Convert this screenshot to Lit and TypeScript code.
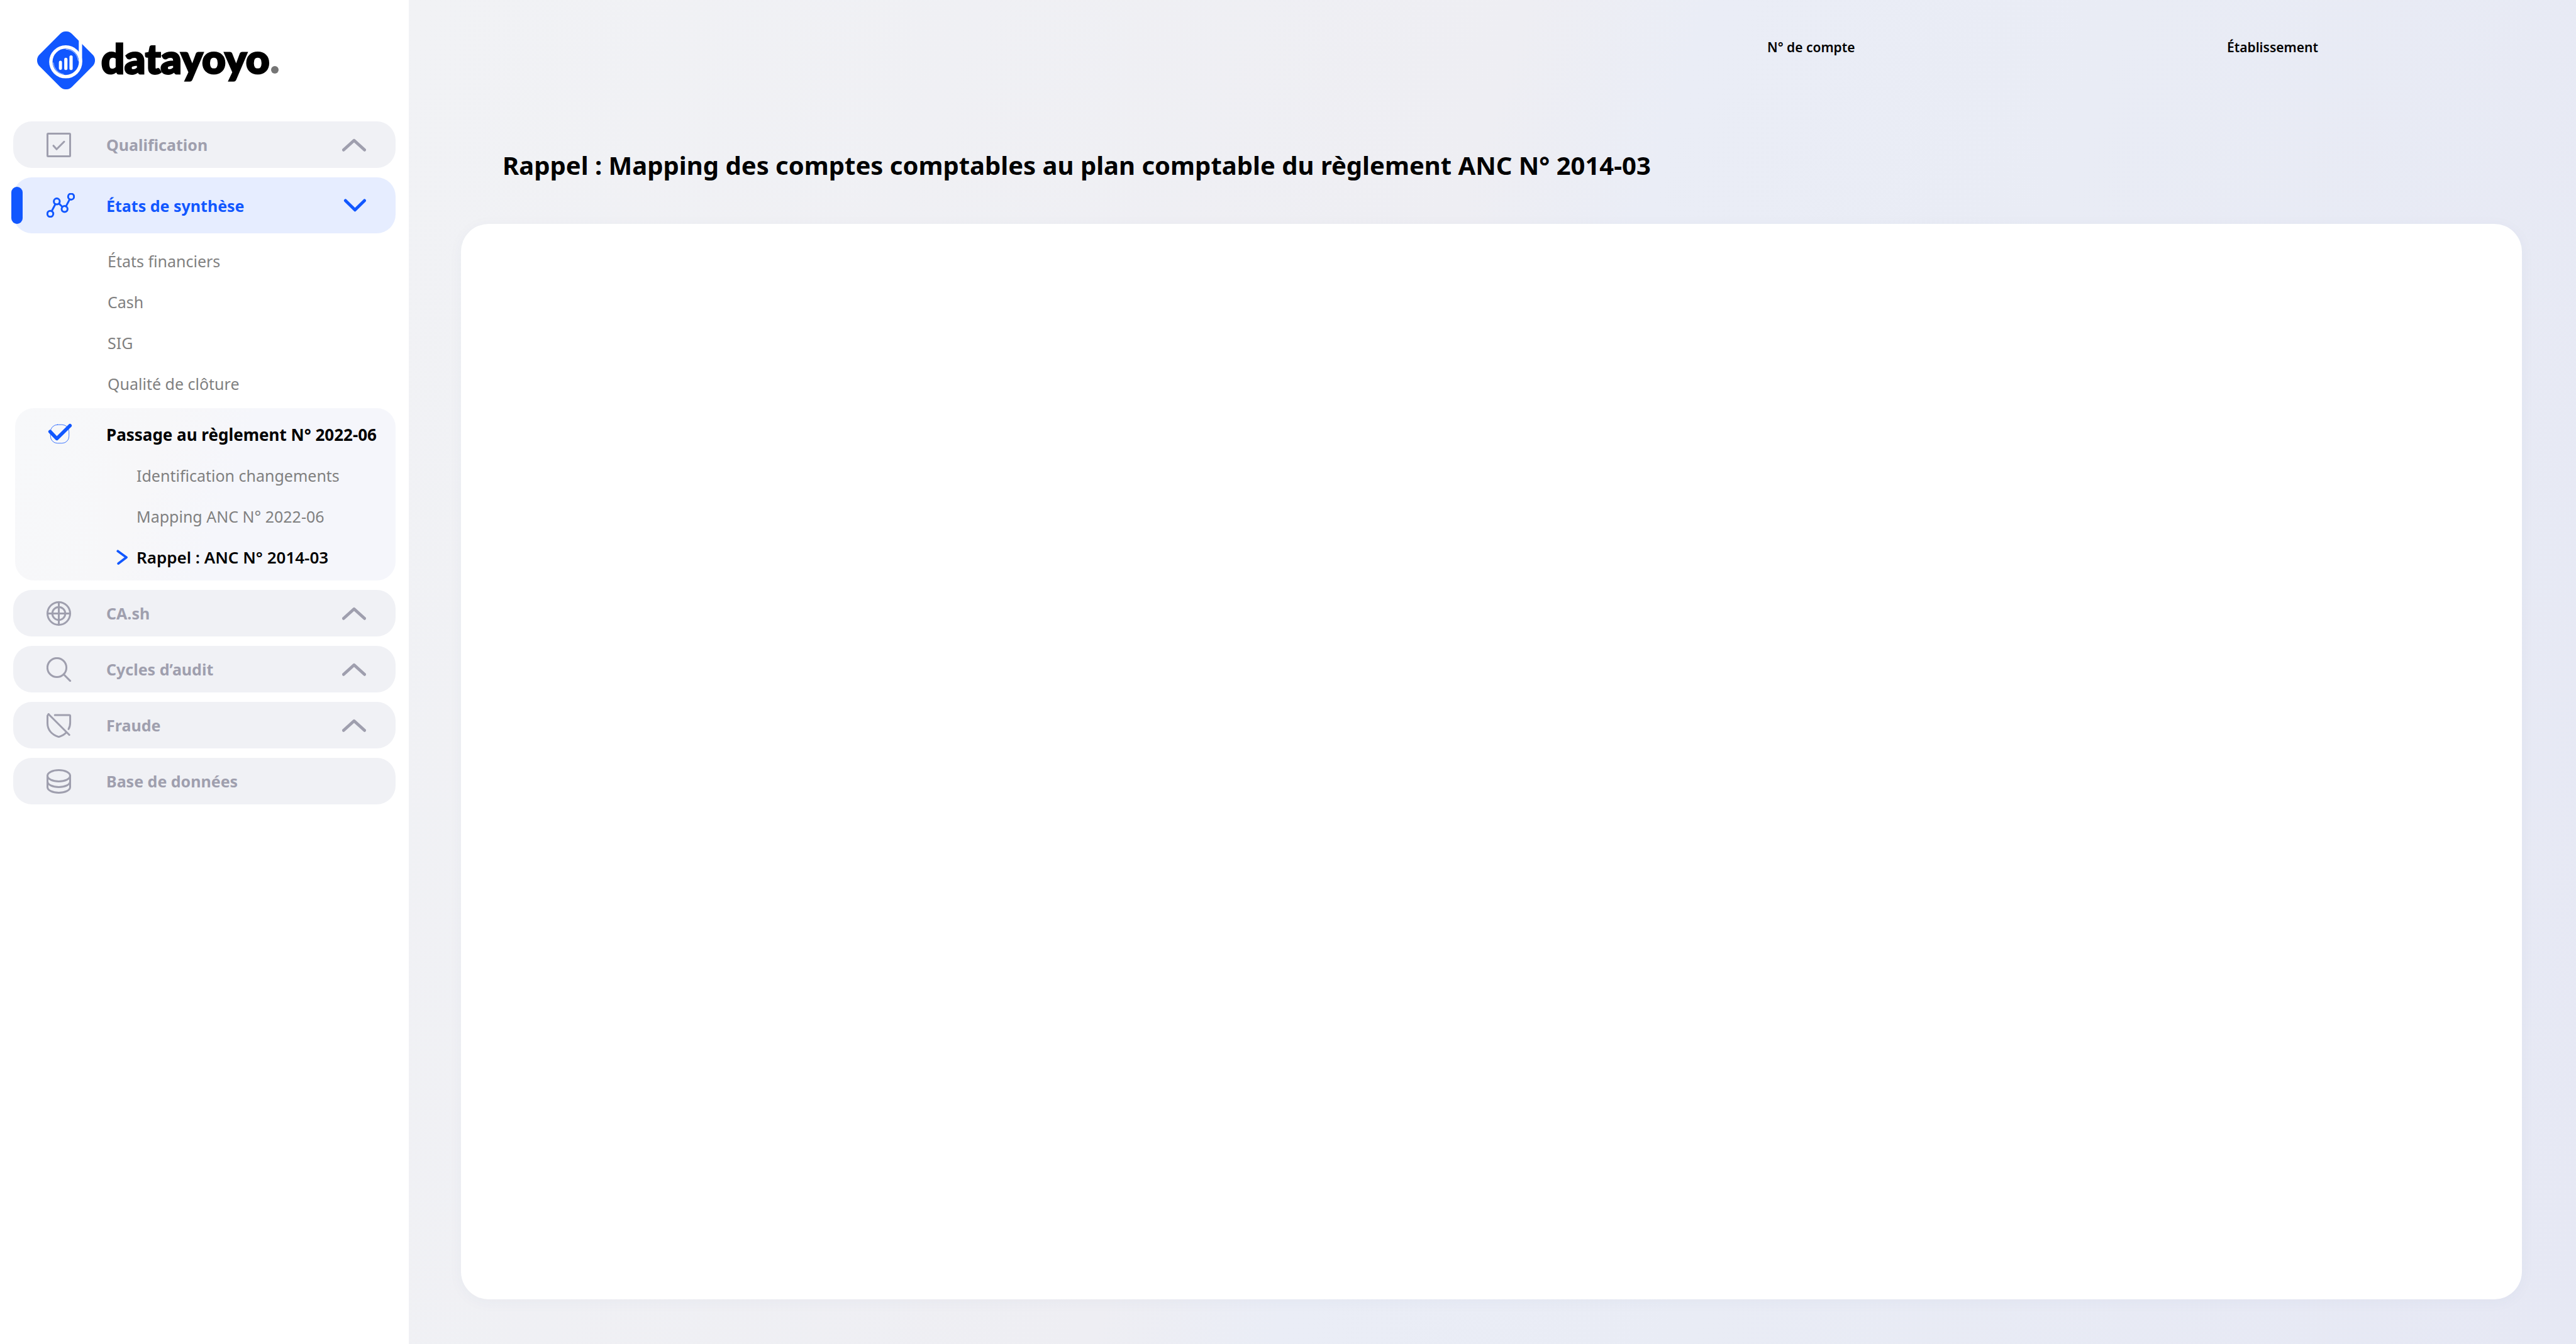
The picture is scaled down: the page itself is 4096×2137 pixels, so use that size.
import { LitElement, html, svg, css, nothing, type TemplateResult, type SVGTemplateResult } from "lit";
import { customElement, property, state } from "lit/decorators.js";
import { classMap } from "lit/directives/class-map.js";

type IconName = "checkbox" | "chart" | "target" | "search" | "shield" | "database";

interface Section {
  label: string;
  icon: IconName;
  expandable: boolean;
  active?: boolean;
}

const ICONS: Record<IconName, SVGTemplateResult> = {
  checkbox: svg`
    <rect x="1.5" y="1.5" width="36" height="36" rx="1"></rect>
    <path d="M11 20.7 16 26.3 28 14.3"></path>`,
  chart: svg`
    <circle cx="6" cy="33" r="4.7"></circle>
    <circle cx="16.3" cy="13.3" r="4.7"></circle>
    <circle cx="28.7" cy="25.3" r="4.7"></circle>
    <circle cx="39" cy="5.7" r="4.7"></circle>
    <path d="M8.2 28.8 14.1 17.5M19.7 16.6 25.3 22M30.9 21.1 36.8 9.9"></path>`,
  target: svg`
    <circle cx="19.5" cy="19.5" r="18"></circle>
    <circle cx="19.5" cy="19.5" r="10.3"></circle>
    <path d="M19.5 1.5V37.5M1.5 19.5H37.5"></path>`,
  search: svg`
    <circle cx="16.5" cy="16.5" r="15.1"></circle>
    <path d="M27.5 27.5 37.6 37.6"></path>`,
  shield: svg`
    <path d="M3.2 1.5 36.2 34.5"></path>
    <path d="M3.2 1.5 1.5 4V16C1.5 27 9 34.8 19.5 37.7 24 36.3 28.3 34 31.3 30.8"></path>
    <path d="M13.2 3H36.2Q37.6 3 37.6 4.4V14.5C37.6 19 36.8 22.4 35 25.3"></path>`,
  database: svg`
    <ellipse cx="19.5" cy="10.5" rx="18" ry="9"></ellipse>
    <path d="M1.5 10.5V28.5C1.5 33.5 9.5 37.5 19.5 37.5S37.5 33.5 37.5 28.5V10.5"></path>
    <path d="M1.5 19.5C1.5 24.5 9.5 28.5 19.5 28.5S37.5 24.5 37.5 19.5"></path>`,
};

@customElement("brand-logo")
class BrandLogo extends LitElement {
  static styles = css`
    :host {
      display: flex;
      align-items: center;
      height: 92px;
    }
    .mark {
      width: 92px;
      height: 92px;
      margin-right: 10px;
    }
    .word {
      padding-bottom: 8px;
      font: 900 65px/66px Lato, sans-serif;
      color: #000;
      -webkit-text-stroke: 3px #000;
    }
    .dot {
      align-self: flex-end;
      width: 12px;
      height: 12px;
      margin: 0 0 25px 2px;
      border-radius: 50%;
      background: #757575;
    }
  `;

  render() {
    return html`
      <svg class="mark" viewBox="0 0 93 93" aria-hidden="true">
        <rect x="9.7" y="9.7" width="73.6" height="73.6" rx="13.3" fill="#1157ff" transform="rotate(45 46.5 46.5)"></rect>
        <path d="M67 0H72.3V48.8H67Z" fill="#fff"></path>
        <circle cx="46" cy="48.8" r="23.9" fill="none" stroke="#fff" stroke-width="5.4"></circle>
        <path d="M46 28.6A20.2 20.2 0 0 1 66 47M26 50A20.2 20.2 0 0 0 43 69" fill="none" stroke="#fff" stroke-width="0.7"></path>
        <g fill="#fff">
          <rect x="35" y="47" width="5" height="15" rx="2.5"></rect>
          <rect x="43.6" y="42.3" width="5.2" height="19.7" rx="2.6"></rect>
          <rect x="52" y="38.3" width="5.2" height="23.7" rx="2.6"></rect>
        </g>
      </svg>
      <span class="word">datayoyo</span>
      <span class="dot"></span>
    `;
  }
}

@customElement("nav-section")
class NavSection extends LitElement {
  @property({ attribute: false }) section!: Section;

  static styles = css`
    :host {
      display: block;
    }
    .item {
      position: relative;
      display: flex;
      align-items: center;
      box-sizing: border-box;
      width: 100%;
      height: 74px;
      padding: 0 47px 0 53px;
      border: 0;
      border-radius: 30px;
      background: #f0f1f5;
      color: #9f9fae;
      font: 700 25px/34px "Noto Sans", "Open Sans", sans-serif;
      text-align: left;
      text-decoration: none;
      cursor: pointer;
    }
    .item.active {
      height: 89px;
      background: #e6edff;
      color: #1157ff;
    }
    .item.active::before {
      content: "";
      position: absolute;
      left: -3px;
      top: 15px;
      width: 18px;
      height: 59px;
      border-radius: 9px;
      background: #1157ff;
    }
    .icon {
      flex: 0 0 95px;
      display: flex;
    }
    .icon svg {
      width: 45px;
      height: 39px;
    }
    .label {
      flex: 1;
    }
    svg {
      fill: none;
      stroke: currentColor;
      stroke-width: 3;
      stroke-linecap: round;
      stroke-linejoin: round;
    }
    .chevron {
      width: 38px;
      height: 21px;
      stroke-width: 5;
    }
  `;

  render() {
    const { label, icon, expandable, active = false } = this.section;
    const body = html`
      <span class="icon"><svg viewBox="0 0 45 39" aria-hidden="true">${ICONS[icon]}</svg></span>
      <span class="label">${label}</span>
      ${expandable
        ? html`<svg class="chevron" viewBox="0 0 39 21" aria-hidden="true">
            <path d=${active ? "M5.5 2.7 21 18 36.5 2.7" : "M2.5 18.5 19.5 3 36.5 18.5"}></path>
          </svg>`
        : nothing}
    `;
    const classes = classMap({ item: true, active });
    return expandable
      ? html`<button class=${classes} type="button" aria-expanded=${active ? "true" : "false"}>${body}</button>`
      : html`<a class=${classes} href="#">${body}</a>`;
  }
}

@customElement("app-root")
class AppRoot extends LitElement {
  @state() private before: Section[] = [
    { label: "Qualification", icon: "checkbox", expandable: true },
    { label: "États de synthèse", icon: "chart", expandable: true, active: true },
  ];

  @state() private after: Section[] = [
    { label: "CA.sh", icon: "target", expandable: true },
    { label: "Cycles d’audit", icon: "search", expandable: true },
    { label: "Fraude", icon: "shield", expandable: true },
    { label: "Base de données", icon: "database", expandable: false },
  ];

  private pages = ["États financiers", "Cash", "SIG", "Qualité de clôture"];

  static styles = css`
    :host {
      display: flex;
      min-height: 100vh;
      font-family: "Noto Sans", "Open Sans", sans-serif;
      color: #000;
    }
    .sidebar {
      flex: 0 0 650px;
      box-sizing: border-box;
      padding: 50px 21px 50px;
      background: #fff;
    }
    .logo {
      margin: 0 0 51px 38px;
    }
    .sections {
      display: flex;
      flex-direction: column;
      gap: 15px;
    }
    .group {
      display: flex;
      flex-direction: column;
    }
    .links {
      margin: 0;
      padding: 0;
      list-style: none;
    }
    .pages {
      padding: 11px 0 7px 150px;
    }
    .link {
      display: flex;
      align-items: center;
      height: 65px;
      color: #808080;
      font-size: 25px;
      line-height: 34px;
      text-decoration: none;
      white-space: nowrap;
    }
    .panel {
      margin-left: 3px;
      padding: 9px 0 5px 50px;
      border-radius: 30px;
      background: linear-gradient(110deg, #f7f8fa, #f7f7f9 35%, #f5f6fb 55%, #f5f6fb);
    }
    .strong {
      color: #000;
      font-size: 26px;
      font-weight: 600;
    }
    .heading {
      font-weight: 700;
    }
    .tick {
      flex: 0 0 95px;
      display: flex;
    }
    .tick svg {
      width: 39px;
      height: 33px;
      overflow: visible;
    }
    .nested {
      padding-left: 111px;
    }
    .pointer {
      flex: 0 0 32px;
      display: flex;
    }
    .pointer svg {
      width: 18px;
      height: 24px;
    }
    svg {
      fill: none;
      stroke: #1157ff;
      stroke-linecap: round;
      stroke-linejoin: round;
    }
    .main {
      flex: 1;
      display: flex;
      flex-direction: column;
      box-sizing: border-box;
      padding: 60px 0 71px;
      background: linear-gradient(108deg, #f1f2f5 0%, #eeeef3 43%, #eaedf6 50%, #e9ecf5 66%, #e6e8f4 100%);
    }
    .topbar {
      display: grid;
      grid-template-columns: 1fr 731px 555px;
      margin-bottom: 145px;
      font-size: 21px;
      font-weight: 600;
      line-height: 30px;
    }
    .account {
      grid-column: 2;
    }
    .title {
      margin: 0 86px 65px 149px;
      font-size: 40px;
      font-weight: 700;
      line-height: 56px;
    }
    .card {
      flex: 1;
      margin: 0 86px 0 83px;
      border-radius: 44px;
      background: #fff;
      box-shadow: 0 4px 24px rgba(60, 70, 120, 0.04);
    }
  `;

  private nestedLink(label: string, current = false): TemplateResult {
    return html`<li>
      <a class=${classMap({ link: true, strong: current })} href="#" aria-current=${current ? "page" : nothing}>
        <span class="pointer">
          ${current
            ? html`<svg viewBox="0 0 18 24" aria-hidden="true"><path d="M2.3 2.3 16 12.2 3.2 22" stroke-width="3.8"></path></svg>`
            : nothing}
        </span>
        ${label}
      </a>
    </li>`;
  }

  render() {
    return html`
      <aside class="sidebar">
        <brand-logo class="logo"></brand-logo>
        <nav class="sections">
          ${this.before.slice(0, 1).map((s) => html`<nav-section .section=${s}></nav-section>`)}
          <div class="group">
            ${this.before.slice(1).map((s) => html`<nav-section .section=${s}></nav-section>`)}
            <ul class="links pages">
              ${this.pages.map((p) => html`<li><a class="link" href="#">${p}</a></li>`)}
            </ul>
            <div class="panel">
              <a class="link strong heading" href="#">
                <span class="tick">
                  <svg viewBox="0 0 39 33" aria-hidden="true">
                    <rect x="6.3" y="1.3" width="29.4" height="29.4" rx="11" stroke-width="0.8"></rect>
                    <path d="M5.7 12.3 16.3 23.4 37.3 2.7" stroke-width="5.6"></path>
                  </svg>
                </span>
                Passage au règlement N° 2022-06
              </a>
              <ul class="links nested">
                ${this.nestedLink("Identification changements")}
                ${this.nestedLink("Mapping ANC N° 2022-06")}
                ${this.nestedLink("Rappel : ANC N° 2014-03", true)}
              </ul>
            </div>
          </div>
          ${this.after.map((s) => html`<nav-section .section=${s}></nav-section>`)}
        </nav>
      </aside>
      <main class="main">
        <header class="topbar">
          <span class="account">N° de compte</span>
          <span>Établissement</span>
        </header>
        <h1 class="title">Rappel : Mapping des comptes comptables au plan comptable du règlement ANC N° 2014-03</h1>
        <section class="card"></section>
      </main>
    `;
  }
}
